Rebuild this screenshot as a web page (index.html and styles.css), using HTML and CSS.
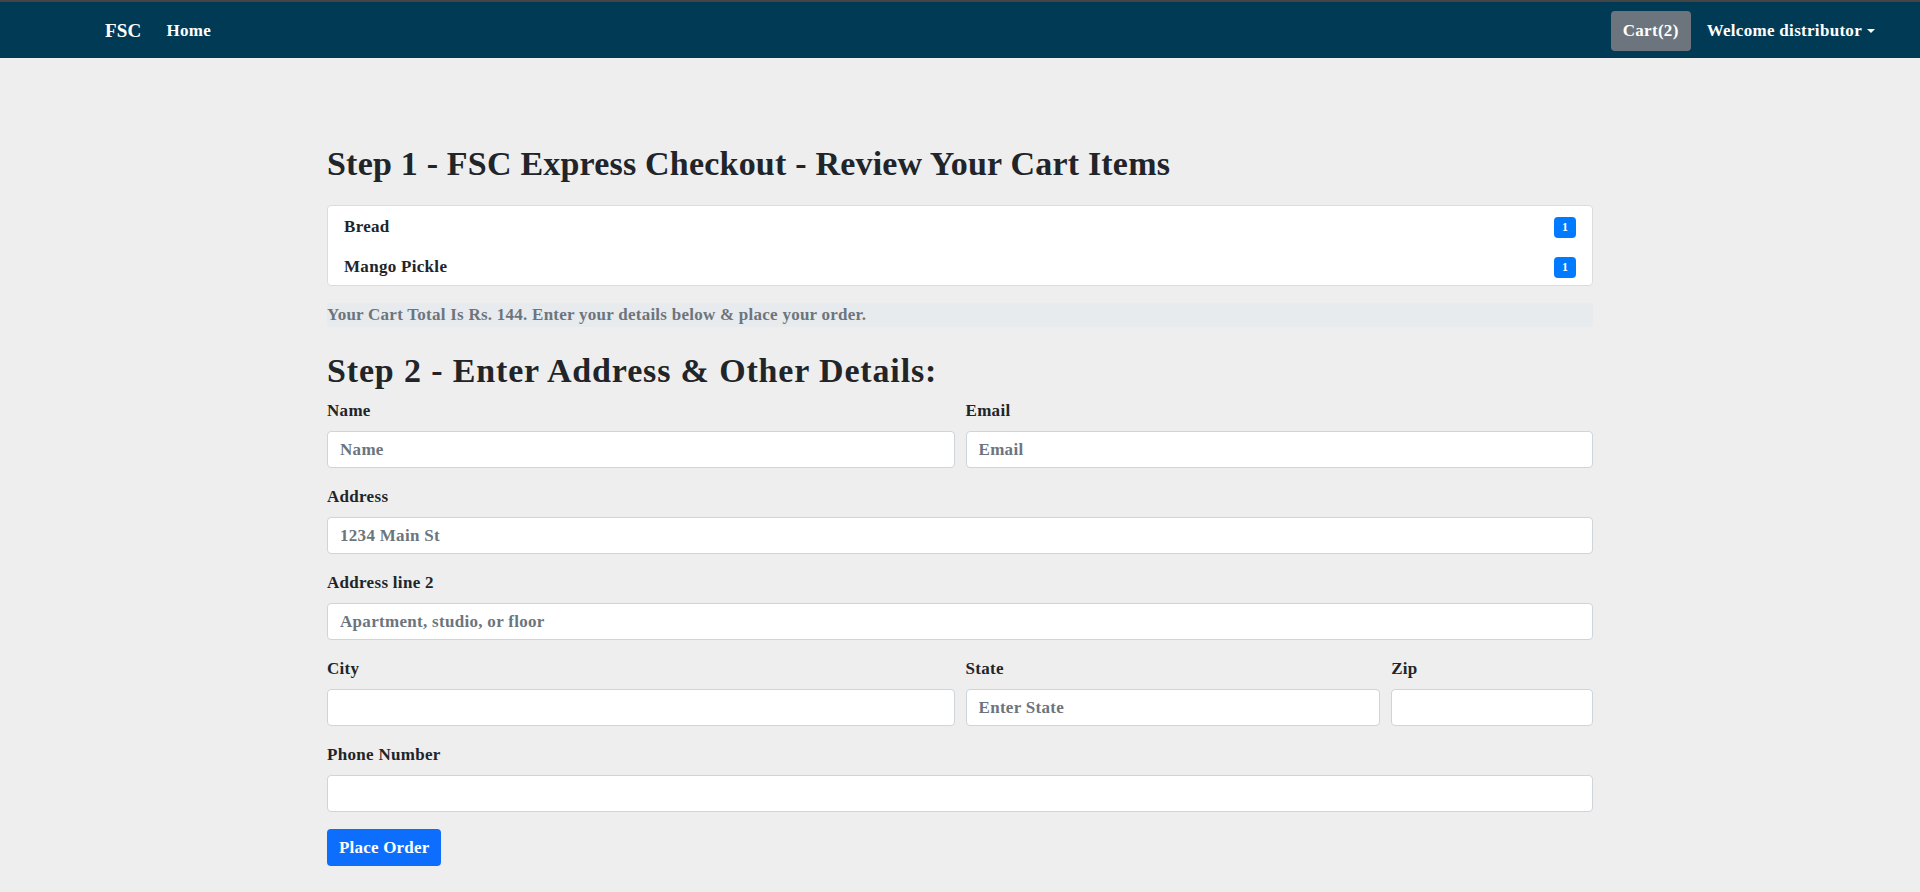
FILE: index.html
```html
<!DOCTYPE html>
<html lang="en">
<head>
<meta charset="utf-8">
<title>FSC Express Checkout</title>
<link rel="stylesheet" href="styles.css">
</head>
<body>
<nav class="navbar">
  <div class="nav-left">
    <a class="brand" href="#">FSC</a>
    <a class="nav-link" href="#">Home</a>
  </div>
  <div class="nav-right">
    <a class="cart-btn" href="#">Cart(2)</a>
    <a class="nav-link dropdown" href="#">Welcome distributor<span class="caret"></span></a>
  </div>
</nav>
<main class="container">
  <h2 class="heading heading-1">Step 1 - FSC Express Checkout - Review Your Cart Items</h2>
  <ul class="list-group">
    <li class="list-item"><span>Bread</span><span class="badge">1</span></li>
    <li class="list-item"><span>Mango Pickle</span><span class="badge">1</span></li>
  </ul>
  <p class="total">Your Cart Total Is Rs. 144. Enter your details below &amp; place your order.</p>
  <h2 class="heading heading-2">Step 2 - Enter Address &amp; Other Details:</h2>
  <form class="form">
    <div class="field col-6">
      <label class="label" for="name">Name</label>
      <input class="input" id="name" type="text" placeholder="Name">
    </div>
    <div class="field col-6">
      <label class="label" for="email">Email</label>
      <input class="input" id="email" type="text" placeholder="Email">
    </div>
    <div class="field col-12">
      <label class="label" for="addr">Address</label>
      <input class="input" id="addr" type="text" placeholder="1234 Main St">
    </div>
    <div class="field col-12">
      <label class="label" for="addr2">Address line 2</label>
      <input class="input" id="addr2" type="text" placeholder="Apartment, studio, or floor">
    </div>
    <div class="field col-6">
      <label class="label" for="city">City</label>
      <input class="input" id="city" type="text">
    </div>
    <div class="field col-4">
      <label class="label" for="state">State</label>
      <input class="input" id="state" type="text" placeholder="Enter State">
    </div>
    <div class="field col-2">
      <label class="label" for="zip">Zip</label>
      <input class="input" id="zip" type="text">
    </div>
    <div class="field col-12">
      <label class="label" for="phone">Phone Number</label>
      <input class="input" id="phone" type="text">
    </div>
    <div class="field col-12">
      <button class="btn-primary" type="button">Place Order</button>
    </div>
  </form>
</main>
</body>
</html>
```
FILE: styles.css
```css
* { box-sizing: border-box; }
html, body { margin: 0; padding: 0; }
body {
  background: #eeeeee;
  font-family: "Liberation Serif", "Times New Roman", serif;
  font-weight: 700;
  font-size: 17px;
  letter-spacing: 0.3px;
  color: #212529;
  line-height: 24px;
}
a { text-decoration: none; }

.navbar {
  border-top: 2px solid #454545;
  background: #003a55;
  height: 58px;
  display: flex;
  align-items: center;
  justify-content: space-between;
  padding: 1px 45px 0 105px;
}
.nav-left, .nav-right { display: flex; align-items: center; }
.brand {
  color: #fff;
  font-size: 19px;
  letter-spacing: 0.2px;
  line-height: 30px;
  margin-right: 25px;
}
.nav-link { color: #fff; font-size: 17px; line-height: 24px; }
.cart-btn {
  color: #fff;
  background: #6c757d;
  border-radius: 4px;
  height: 40px;
  padding: 0 12px;
  display: flex;
  align-items: center;
  margin-right: 16px;
}
.dropdown { display: flex; align-items: center; }
.caret {
  display: inline-block;
  margin-left: 5px;
  border-top: 4px solid #fff;
  border-left: 4px solid transparent;
  border-right: 4px solid transparent;
}

.container {
  width: 1266px;
  margin: 0 auto;
  padding-top: 86px;
}
.heading {
  font-size: 34px;
  line-height: 40px;
  margin: 0;
  color: #212529;
}
.heading-1 { margin-bottom: 21px; letter-spacing: 0.2px; }
.heading-2 { margin-top: 24px; margin-bottom: 8px; letter-spacing: 0.85px; }

.list-group {
  list-style: none;
  margin: 0;
  padding: 0;
  background: #fff;
  border: 1px solid #dcdcdc;
  border-radius: 4px;
}
.list-item {
  display: flex;
  justify-content: space-between;
  align-items: center;
  padding: 9px 16px 7px;
  line-height: 24px;
}
.list-item:last-child { padding-bottom: 6px; }
.badge {
  background: #007bff;
  color: #fff;
  font-size: 12px;
  letter-spacing: 0;
  line-height: 21px;
  min-width: 22px;
  text-align: center;
  border-radius: 4px;
  padding: 0 6px;
}

.total {
  margin: 17px 0 0;
  background: #e8ebee;
  color: #6c757d;
  line-height: 24px;
  height: 24px;
  letter-spacing: 0.25px;
  border-radius: 3px;
}

.form {
  display: grid;
  grid-template-columns: repeat(12, 1fr);
  column-gap: 11px;
  row-gap: 17px;
}
.col-12 { grid-column: span 12; }
.col-6 { grid-column: span 6; }
.col-4 { grid-column: span 4; }
.col-2 { grid-column: span 2; }
.field { display: flex; flex-direction: column; align-items: flex-start; }
.label { display: block; line-height: 24px; margin-bottom: 8px; }
.input {
  width: 100%;
  height: 37px;
  border: 1px solid #ced4da;
  border-radius: 4px;
  background: #fff;
  padding: 0 12px;
  font-family: inherit;
  font-weight: 700;
  font-size: 17px;
  letter-spacing: 0.3px;
  color: #495057;
}
.input::placeholder { color: #6c757d; opacity: 1; }
.btn-primary {
  background: #0d6efd;
  color: #fff;
  border: 0;
  border-radius: 4px;
  height: 37px;
  padding: 0 12px;
  font-family: inherit;
  font-weight: 700;
  font-size: 17px;
  letter-spacing: 0.2px;
}
```
